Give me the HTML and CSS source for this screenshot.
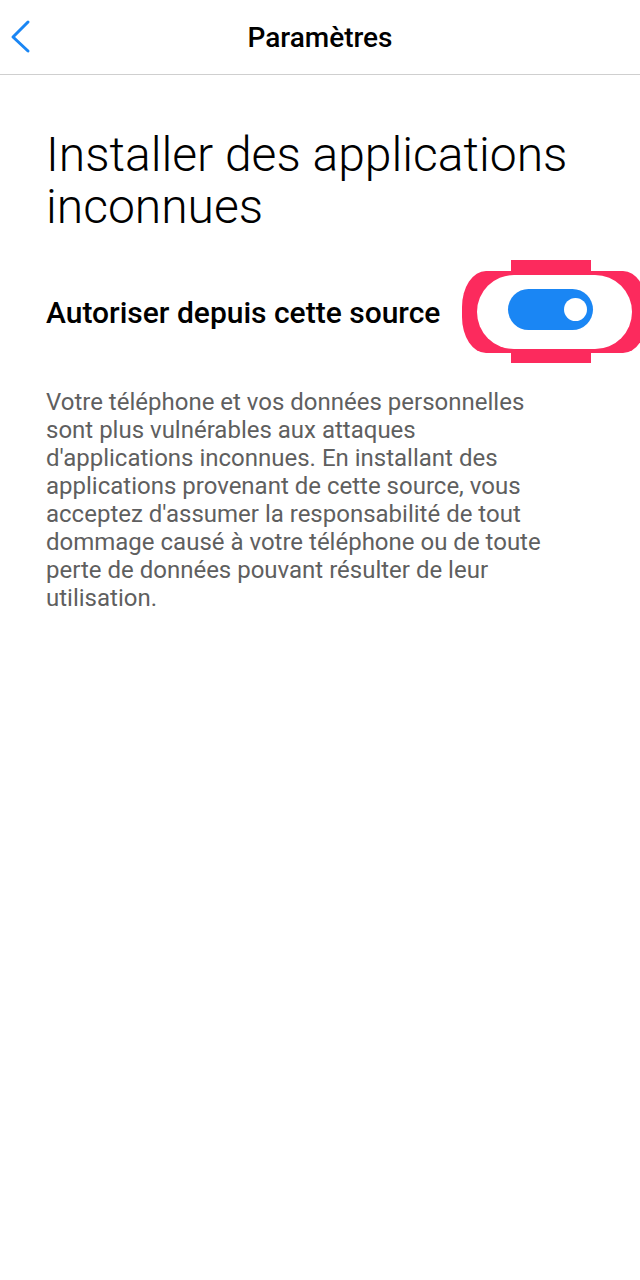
FILE: index.html
```html
<!DOCTYPE html>
<html lang="fr">
<head>
  <meta charset="UTF-8" />
  <meta name="viewport" content="width=device-width, initial-scale=1" />
  <title>Paramètres</title>
  <link rel="stylesheet" href="styles.css">
</head>
<body>
  <header class="top-bar">
    <button class="back-btn" aria-label="Retour">
      <svg width="40" height="40" viewBox="0 0 40 40">
        <polyline points="28,7 13,22 28,36" fill="none" stroke="#1a86f4" stroke-width="3" stroke-linecap="round" stroke-linejoin="round" />
      </svg>
    </button>
    <div class="top-title">Paramètres</div>
  </header>

  <main class="content">
    <h1 class="page-title">Installer des applications inconnues</h1>

    <div class="setting-row">
      <span class="setting-label">Autoriser depuis cette source</span>
      <div class="toggle-wrap">
        <!-- highlight drawn round the switch -->
        <svg class="highlight" width="200" height="115" viewBox="0 0 200 115" aria-hidden="true">
          <rect x="7" y="16" width="185" height="82" rx="24" ry="36" fill="#fc2a5d" />
          <rect x="22" y="20" width="155" height="74" rx="37" ry="37" fill="#fff" />
          <rect x="56" y="5" width="80" height="13" fill="#fc2a5d" />
          <rect x="56" y="96" width="80" height="12" fill="#fc2a5d" />
        </svg>
        <div class="toggle on" role="switch" aria-checked="true">
          <span class="knob"></span>
        </div>
      </div>
    </div>

    <p class="description">
      Votre téléphone et vos données personnelles sont plus vulnérables aux attaques d'applications inconnues. En installant des applications provenant de cette source, vous acceptez d'assumer la responsabilité de tout dommage causé à votre téléphone ou de toute perte de données pouvant résulter de leur utilisation.
    </p>
  </main>
</body>
</html>
```

FILE: styles.css
```css
body {
  margin: 0;
  font-family: Roboto, "Noto Sans", sans-serif;
  background: #fff;
  color: #000;
  overflow-x: hidden;
}

.top-bar {
  height: 74px;
  border-bottom: 1px solid #cfcfcf;
  display: flex;
  align-items: center;
  justify-content: center;
  position: relative;
}

.back-btn {
  position: absolute;
  left: 0;
  top: 15px;
  width: 40px;
  height: 40px;
  padding: 0;
  border: none;
  background: transparent;
}
.back-btn svg {
  display: block;
}

.top-title {
  font-size: 28px;
  font-weight: 500;
  color: #000;
}

.content {
  padding: 0 47px 0 46px;
}

.page-title {
  margin: 54px 0 0;
  font-size: 48px;
  font-weight: 300;
  line-height: 52px;
  color: #000;
}

.setting-row {
  display: flex;
  align-items: center;
  justify-content: space-between;
  margin-top: 56px;
}

.setting-label {
  font-size: 30px;
  font-weight: 500;
  color: #000;
  margin-top: 5px;
}

.toggle-wrap {
  position: relative;
  flex-shrink: 0;
}

.highlight {
  position: absolute;
  left: -53px;
  top: -34px;
}

.toggle {
  position: relative;
  width: 85px;
  height: 41px;
  border-radius: 21px;
  background: #1a86f4;
}
.toggle .knob {
  position: absolute;
  right: 6px;
  top: 9px;
  width: 23px;
  height: 23px;
  border-radius: 50%;
  background: #fff;
}

.description {
  margin: 58px 0 0;
  max-width: 505px;
  font-size: 24px;
  line-height: 28px;
  color: #5f5f5f;
}
```
